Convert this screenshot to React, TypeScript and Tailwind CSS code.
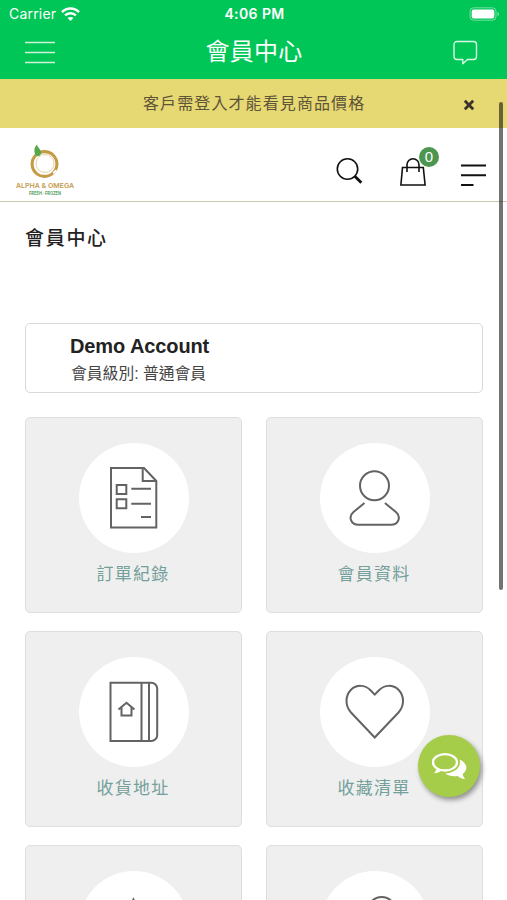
import type { ReactNode } from 'react';

function StatusBar() {
  return (
    <div className="flex h-[27px] items-center justify-between pl-[9px] pr-[7px] text-[14px] leading-none">
      <div className="flex w-[120px] items-center gap-[5px]">
        <span className="tracking-[0.200px]">Carrier</span>
        <svg width="19" height="14" viewBox="0 0 19 14" fill="none" stroke="white" strokeWidth="2.500">
          <path d="M1 5.200C5.800 .4 13.200 .4 18 5.200" />
          <path d="M4.100 8.400c3-3 7.800-3 10.800 0" />
          <path d="M9.500 14L6.600 11.100c1.600-1.600 4.200-1.600 5.800 0z" fill="white" stroke="none" />
        </svg>
      </div>
      <span className="font-semibold tracking-[0.400px]">4:06 PM</span>
      <div className="flex w-[120px] justify-end">
        <svg width="31" height="14" viewBox="0 0 31 14">
          <rect x="1" y=".8" width="26" height="12.400" rx="3.600" fill="none" stroke="white" strokeOpacity=".45" />
          <rect x="2.700" y="2.400" width="22.600" height="9.200" rx="2" fill="white" />
          <path d="M28.500 4.800c2 .9 2 3.500 0 4.400z" fill="white" fillOpacity=".5" />
        </svg>
      </div>
    </div>
  );
}

function NavBar() {
  return (
    <div className="flex h-[52px] items-center justify-between pl-[25px] pr-[29px]">
      <svg width="30" height="24" viewBox="0 0 30 24" stroke="white" strokeOpacity=".8" strokeWidth="1.500">
        <path d="M0 1.500h30M0 11.500h30M0 21.500h30" />
      </svg>
      <h1 className="pb-[3px] text-[24px] leading-none tracking-[0.300px]">會員中心</h1>
      <svg width="25" height="26" viewBox="0 0 25 26" fill="none" stroke="white" strokeOpacity=".85" strokeWidth="1.400" strokeLinejoin="round">
        <path d="M4 1.500h16.500a3 3 0 0 1 3 3v12a3 3 0 0 1-3 3H14.500l-4.700 4.200v-4.200H4a3 3 0 0 1-3-3v-12a3 3 0 0 1 3-3z" />
      </svg>
    </div>
  );
}

function Logo() {
  return (
    <svg width="60" height="54" viewBox="0 0 60 54" fontFamily="Inter, sans-serif" textAnchor="middle">
      <circle cx="29.500" cy="20" r="12.400" fill="none" stroke="#c49a45" strokeWidth="3.100" />
      <circle cx="30" cy="19.500" r="9" fill="none" stroke="#e6d3aa" strokeWidth="1" />
      <path d="M37.500 28.500l3-3 1.500 1.500-3 3z" fill="white" />
      <path d="M21.500 12C18.200 8 19 3.500 22 .5c.3 3 4.200 4.500 4.100 8.500-.1 2.200-2 3.600-4.600 3z" fill="#55a94b" />
      <text x="30" y="43.500" fontSize="6.800" fontWeight="600" fill="#c49b4f" textLength="58" lengthAdjust="spacingAndGlyphs">ALPHA &amp; OMEGA</text>
      <text x="30" y="50.500" fontSize="5.200" fontWeight="700" fill="#58a565" textLength="32" lengthAdjust="spacingAndGlyphs">FRESH · FROZEN</text>
    </svg>
  );
}

function ShopHeader() {
  return (
    <header className="flex h-[74px] items-center justify-between border-b border-[#c4ceae] pl-[15px] pr-[20px]">
      <div className="pt-[13px]">
        <Logo />
      </div>
      <div className="flex items-center">
        <svg className="mt-[13px]" width="28" height="28" viewBox="0 0 28 28" fill="none" stroke="#111">
          <circle cx="11.500" cy="12" r="10.200" strokeWidth="1.600" />
          <path d="M18.800 19.300l6.500 6.500" strokeWidth="2.800" />
        </svg>
        <div className="relative ml-[36px] mt-[14px]">
          <svg width="26" height="28" viewBox="0 0 26 28" fill="none" stroke="#111" strokeWidth="1.600">
            <path d="M2.500 9.500h20.800l1.800 17.500H.9z" />
            <path d="M7 14V6.800a6 6 0 0 1 12 0V14" />
          </svg>
          <span className="absolute -top-[11px] left-[19px] flex h-[20px] w-[20px] items-center justify-center rounded-full bg-[#4c9650] text-[15px] leading-none text-white">
            0
          </span>
        </div>
        <svg className="ml-[34px] mt-[21px]" width="27" height="24" viewBox="0 0 27 24" stroke="#111" strokeWidth="2">
          <path d="M1 2.500h25M1 12.200h25M1 21.900h12.500" />
        </svg>
      </div>
    </header>
  );
}

function OrderIcon() {
  return (
    <>
      <path d="M32 25h33l12.300 13v46.500H32z" />
      <path d="M63.700 25v13h13.600M37.700 42h9.600v9h-9.600zM37.700 56.200h9.600v9h-9.600zM52.300 45.700H72M52.300 60.700H72M62 74h10" />
    </>
  );
}

function PersonIcon() {
  return (
    <>
      <circle cx="54.500" cy="42.700" r="14.500" />
      <path d="M44.500 60L33.500 69c-5.500 4.600-2.800 12.700 5 12.700h32.400c7.800 0 10.500-8.100 5-12.700l-11-9" />
    </>
  );
}

function AddressIcon() {
  return (
    <>
      <path d="M31.500 25.700h40.700a6 6 0 0 1 6 6V78a6 6 0 0 1-6 6H31.500z" />
      <path d="M62.500 25.700V84M70 25.700V84" />
      <path d="M39.500 52.500l8-6.800 8 6.800M42.500 50.500v8h10v-8" />
    </>
  );
}

function HeartIcon() {
  return (
    <path d="M54.700 37.600L50.500 33.200C45 27.500 36.500 27.500 31 32.800C25 39 25 48.800 31 55.500L54.700 80.500L78.500 55.500C84.500 48.800 84.500 39 78.500 32.800C73 27.500 64.500 27.500 59 33.200Z" />
  );
}

function StarIcon() {
  return <path d="M54.400 28.500l8.500 17.500 19 2.700-13.700 13.400 3.200 19-17-9-17 9 3.200-19L27 48.700 46 46z" />;
}

function CoinIcon() {
  return <circle cx="61.700" cy="40" r="14" />;
}

type TileProps = { label: string; icon: ReactNode };

const tiles: TileProps[] = [
  { label: '訂單紀錄', icon: <OrderIcon /> },
  { label: '會員資料', icon: <PersonIcon /> },
  { label: '收貨地址', icon: <AddressIcon /> },
  { label: '收藏清單', icon: <HeartIcon /> },
  { label: '', icon: <StarIcon /> },
  { label: '', icon: <CoinIcon /> },
];

function Tile({ label, icon }: TileProps) {
  return (
    <a className="flex h-[196px] flex-col items-center rounded-[5px] border border-[#dedede] bg-[#efefef] pt-[25px]">
      <div className="h-[110px] w-[110px] rounded-full bg-white">
        <svg width="110" height="110" viewBox="0 0 110 110" fill="none" stroke="#636363" strokeWidth="2">
          {icon}
        </svg>
      </div>
      <span className="mr-[1px] mt-[10px] text-[17px] leading-[24px] tracking-[1.200px] text-[#73a09a]">{label}</span>
    </a>
  );
}

function ChatButton() {
  return (
    <button className="absolute left-[418px] top-[735px] flex h-[62px] w-[62px] items-center justify-center rounded-full bg-[#a5cd4a] shadow-[2px_3px_5px_rgba(0,0,0,0.4)]">
      <svg width="36" height="28" viewBox="0 0 36 28">
        <ellipse cx="14" cy="10.300" rx="12" ry="8.200" fill="none" stroke="white" strokeWidth="2.300" />
        <path d="M5.500 15.500c0 2.500-.7 3.700-2.400 5.700 3.700-.2 6-1.300 7.700-3.200z" fill="white" />
        <path d="M28.700 7.500c8 4 8.500 10.500 3 14.500.2 1.800 1 3.200 2.500 4.900-3.500-.2-5.700-1.300-7.500-3-5 .8-9.500-.3-12.500-2.500 8.500 0 16.500-5.500 14.500-13.900z" fill="white" />
      </svg>
    </button>
  );
}

export default function App() {
  return (
    <div className="relative h-[900px] w-[507px] overflow-hidden bg-white font-['Liberation_Sans','Noto_Sans_CJK_TC',sans-serif]">
      <div className="h-[79px] bg-[#00c657] font-[Inter,'Noto_Sans_CJK_TC',sans-serif] text-white">
        <StatusBar />
        <NavBar />
      </div>

      {/* Notice */}
      <div className="flex h-[49px] items-center bg-[#e6d873] pl-[143px] pr-[32px] text-[#5e5438]">
        <p className="flex-1 text-[16px] leading-none tracking-[1.100px]">客戶需登入才能看見商品價格</p>
        <svg className="mt-[3px]" width="12" height="12" viewBox="0 0 12 12" stroke="#3b3328" strokeWidth="2.800">
          <path d="M1.800 1.800l8.400 8.400M10.200 1.800l-8.400 8.400" />
        </svg>
      </div>

      <ShopHeader />

      <main className="pl-[25px] pr-[24px]">
        <h2 className="pt-[23px] text-[19px] font-medium leading-[28px] tracking-[1.700px] text-[#222]">會員中心</h2>

        <section className="mt-[70px] h-[70px] rounded-[5px] border border-[#d9d9d9] pl-[44px] pt-[10px]">
          <div className="text-[20px] font-bold leading-[25px] tracking-[-0.100px] text-[#222]">Demo Account</div>
          <div className="mt-[2px] pl-[1px] text-[15.800px] leading-[25px] text-[#444]">會員級別: 普通會員</div>
        </section>

        <div className="mt-[24px] grid grid-cols-2 gap-x-[24px] gap-y-[18px]">
          {tiles.map((tile, i) => (
            <Tile key={i} {...tile} />
          ))}
        </div>
      </main>

      <ChatButton />

      {/* Scroll indicator */}
      <div className="absolute left-[499px] top-[102px] h-[488px] w-[4px] rounded-full bg-black/55" />
    </div>
  );
}
